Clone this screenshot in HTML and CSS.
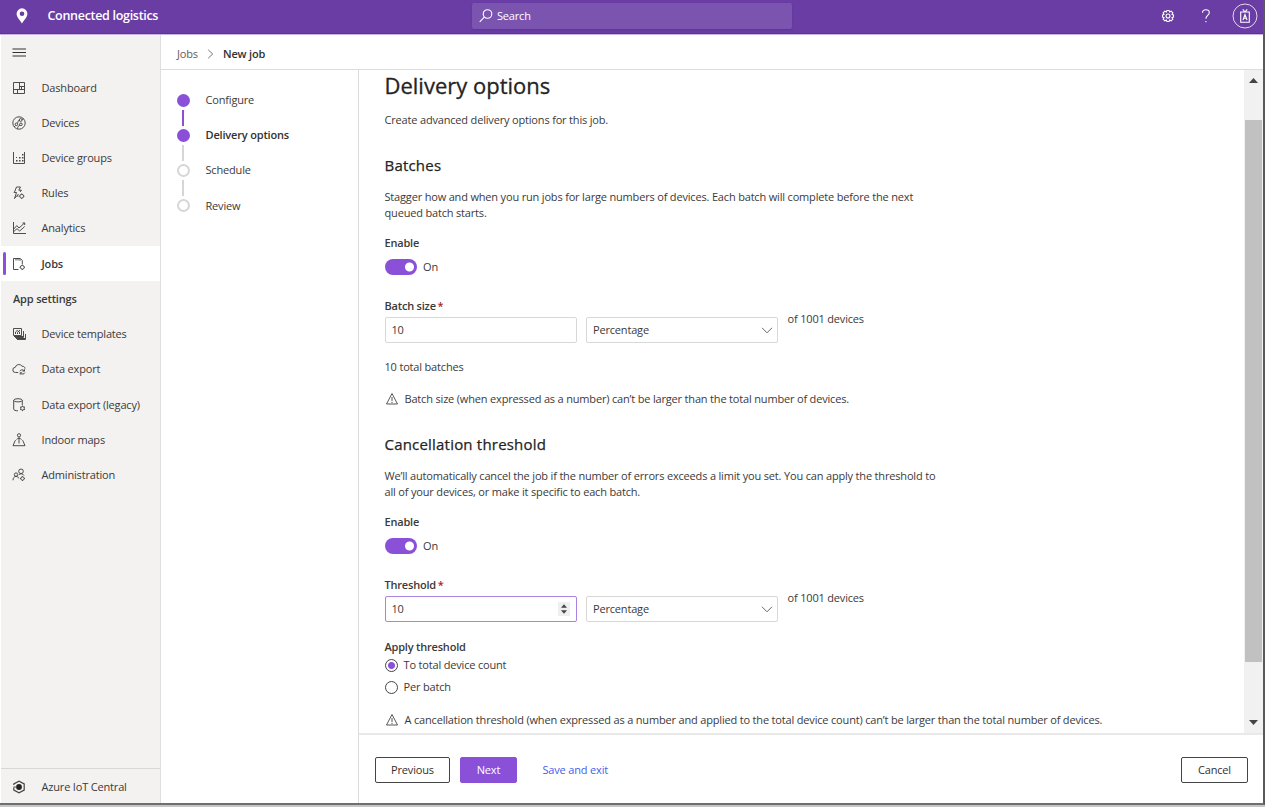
FILE: index.html
```html
<!DOCTYPE html>
<html lang="en">
<head>
<meta charset="utf-8">
<title>Connected logistics - New job</title>
<link rel="stylesheet" href="styles.css">
</head>
<body>
<div class="window">
  <header class="topbar">
    <svg class="pin" width="12" height="16" viewBox="0 0 12 16"><path fill="#fff" fill-rule="evenodd" d="M6 0.3a5.4 5.4 0 0 0-5.4 5.4C.6 9.2 4 12 6 15.6 8 12 11.4 9.2 11.4 5.7A5.4 5.4 0 0 0 6 .3zM6 3.4a2.3 2.3 0 1 1 0 4.6 2.3 2.3 0 0 1 0-4.6z"/></svg>
    <span class="brand">Connected logistics</span>
    <div class="search">
      <svg class="line-icon" width="14" height="14" viewBox="0 0 14 14"><circle cx="8.5" cy="5" r="4.3"/><path d="M5.3 8.2L.7 12.9"/></svg>
      <span>Search</span>
    </div>
    <div class="top-actions">
      <svg class="line-icon" width="14" height="14" viewBox="0 0 14 14"><circle cx="7" cy="7" r="2"/><path d="M5.900.700h2.200l.5 1.500 1.600-.8 1.600 1.600-.8 1.600 1.500.5v2.200l-1.500.5.8 1.600-1.600 1.600-1.600-.8-.5 1.500H5.900l-.5-1.500-1.600.8-1.600-1.600.8-1.600-1.500-.5V5.100l1.500-.5-.8-1.600 1.600-1.600 1.600.8z" transform="translate(0 .8)"/></svg>
      <svg class="line-icon" width="10" height="14" viewBox="0 0 10 14"><path d="M1.500 3.800C1.500 1.900 2.900.8 4.900.8s3.400 1.100 3.400 2.900c0 2.700-3.400 2.800-3.400 6"/><path d="M4.900 11.900v1.300"/></svg>
      <svg class="line-icon" width="26" height="26" viewBox="0 0 26 26"><circle cx="13" cy="13" r="12" stroke-width=".8"/><path d="M8.700 9h8.600v10.300H8.700zM10.800 6.300L13 9l2.200-2.700M11 17l2-5.500 2 5.500M11.700 15.200h2.600"/></svg>
    </div>
  </header>
  <div class="body">
    <nav class="sidebar">
      <div class="burger"><svg width="14" height="9" viewBox="0 0 14 9"><path stroke="#333" d="M.500 1h13.500M.500 4.500h13.500M.500 8h13.500"/></svg></div>
      <a class="item"><svg width="14" height="14" viewBox="0 0 14 14"><path d="M1.500 1.500h11v11h-11zM7.500 1.500v7M1.500 8.500h11M7.500 5.500h5M5.500 8.500v4M9.500 5.500v3"/></svg><span>Dashboard</span></a>
      <a class="item"><svg width="14" height="14" viewBox="0 0 14 14"><circle cx="7" cy="7" r="6.200"/><circle cx="8.700" cy="4" r="1.400"/><circle cx="4.400" cy="8.300" r="1.300"/><circle cx="8.900" cy="8.300" r="1.300"/><path d="M7.400 4.300C5 4.500 6.800 7 5.200 7.300M2 11l1.600-1.600M5.500 12.800c0-2 1.200-3.200 2.500-3.700M10 3.500l1.500-.8"/></svg><span>Devices</span></a>
      <a class="item"><svg width="14" height="14" viewBox="0 0 14 14"><path d="M1.500 1v11.500h11V1"/><path class="dots" d="M4 9h1.500v1.500H4zM7 9h1.500v1.500H7zM10 9h1.500v1.500H10zM7 6h1.500v1.500H7zM10 6h1.500v1.500H10zM10 3h1.500v1.500H10zM4 6h1v1H4z"/></svg><span>Device groups</span></a>
      <a class="item"><svg width="14" height="14" viewBox="0 0 14 14"><path d="M4.500 1h4L6.800 4.200h2.700L8 6M4.500 1L2.300 6.500h2.200L2.500 12.500l4-4.500M2.300 6.500H1.800M5 10h1.500"/><circle cx="9.700" cy="10.200" r="1.900"/><path d="M9.700 7.500v.8M9.700 12.100v.8M7 10.200h.8M11.600 10.200h.8"/></svg><span>Rules</span></a>
      <a class="item"><svg width="14" height="14" viewBox="0 0 14 14"><path d="M1.500 1v11.500H14M1.800 8l3-3.400L7 7l5.500-5M1.800 10.500L5 7.700 7.700 10l5-4.500M10.500 2h2.200v2"/></svg><span>Analytics</span></a>
      <a class="item current"><svg width="14" height="14" viewBox="0 0 14 14"><path d="M6.500 12.500h-5v-11h6.800l2 2V7M4 1.500v2M6 1.500v2M8 1.500v2.300"/><circle cx="10.300" cy="10.300" r="1.900"/><path d="M10.300 7.500v.9M10.300 12.200v.9M7.600 10.300h.8M12.200 10.300h.8"/></svg><span>Jobs</span></a>
      <div class="item group">App settings</div>
      <a class="item"><svg width="14" height="14" viewBox="0 0 14 14"><path d="M1.500 1.500h8v7h-8zM3 10.500h8.500V4M5 12.500h8.500V7"/><path d="M3.500 7V5l1.600-1.500L7.500 5v2M5.500 7V5.500M8 3L5.500 5.500"/><path d="M2 9.500h9M4 11.500h9" stroke-width="1.200"/></svg><span>Device templates</span></a>
      <a class="item"><svg width="14" height="14" viewBox="0 0 14 14"><path d="M6.200 10.500H3.500a2.600 2.600 0 0 1-.2-5.200A3.700 3.700 0 0 1 10 4.200c1.900-.1 3 1 3 2.500M7.800 9.300c.6-1.700 3.300-2.100 4.400-.4M12.500 7.300v1.800h-1.900M12.900 10.600c-.6 1.700-3.300 2.100-4.400.4M8.200 12.600v-1.800h1.900"/></svg><span>Data export</span></a>
      <a class="item"><svg width="14" height="14" viewBox="0 0 14 14"><ellipse cx="6" cy="2.300" rx="4.300" ry="1.600"/><path d="M1.700 2.300v8.900c0 .9 1.800 1.600 4.300 1.600M10.300 2.300V7"/><circle cx="10.500" cy="10.300" r="1.800"/><path d="M10.500 7.500v1M10.500 12.100v1M8 8.900l.9.500M12 11.200l1 .5M8 11.700l.9-.5M12 9.400l1-.5"/></svg><span>Data export (legacy)</span></a>
      <a class="item"><svg width="14" height="14" viewBox="0 0 14 14"><circle cx="7" cy="2.300" r="1.600"/><path d="M7 4v6.500M4.500 6.500C5 5.600 6 5.500 7 5.500s2 .1 2.500 1M3.700 7.500h-.5L1 12.700h12l-2.200-5.200h-.5"/></svg><span>Indoor maps</span></a>
      <a class="item"><svg width="14" height="14" viewBox="0 0 14 14"><circle cx="9" cy="3.300" r="2.300"/><circle cx="4" cy="6.600" r="1.700"/><path d="M1 12.300c0-2.300 1.200-3.900 3-3.900s2.500 1 2.700 2M6.700 6.800c1.300-1.400 4.300-1.400 5.300.7"/><circle cx="10.500" cy="10.500" r="1.700"/><path d="M10.500 8v.8M10.500 12.200v.8M8 10.500h.8M12.200 10.500h.8"/></svg><span>Administration</span></a>
      <a class="item central"><svg width="14" height="14" viewBox="0 0 14 14"><path d="M1.800 5V3.900L7 1.200l5.200 2.700v6.200L7 12.800l-5.200-2.700V7.500" stroke-width="1.200"/><circle cx="7" cy="7" r="2.900" fill="#222" stroke="none"/><path d="M1.500 7h3"/></svg><span>Azure IoT Central</span></a>
    </nav>
    <main class="main">
      <div class="crumbs"><span class="crumb">Jobs</span><svg width="7" height="10" viewBox="0 0 7 10"><path fill="none" stroke="#777" d="M1.200.8l4.500 4.200-4.500 4.200"/></svg><span class="here">New job</span></div>
      <div class="columns">
        <ol class="steps">
          <li class="done"><i></i><span>Configure</span></li>
          <li class="active"><i></i><span>Delivery options</span></li>
          <li><i></i><span>Schedule</span></li>
          <li><i></i><span>Review</span></li>
        </ol>
        <section class="pane">
          <div class="scroller">
            <div class="form">
              <h1>Delivery options</h1>
              <p class="intro">Create advanced delivery options for this job.</p>
              <h2>Batches</h2>
              <p class="about">Stagger how and when you run jobs for large numbers of devices. Each batch will complete before the next<br>queued batch starts.</p>
              <div class="label enable">Enable</div>
              <div class="switch"><span class="track"></span><span>On</span></div>
              <div class="label">Batch size <b>*</b></div>
              <div class="fields">
                <div class="box"><span>10</span></div>
                <div class="box select"><span>Percentage</span><svg width="12" height="7" viewBox="0 0 12 7"><path d="M1 .8l5 5 5-5"/></svg></div>
                <span class="of">of 1001 devices</span>
              </div>
              <p class="total">10 total batches</p>
              <p class="warn"><svg width="12" height="12" viewBox="0 0 12 12"><path d="M6 .5l5.500 10.500H.5zM6 4v4M6 8.800v1.200"/></svg><span>Batch size (when expressed as a number) can’t be larger than the total number of devices.</span></p>
              <h2>Cancellation threshold</h2>
              <p class="about">We’ll automatically cancel the job if the number of errors exceeds a limit you set. You can apply the threshold to<br>all of your devices, or make it specific to each batch.</p>
              <div class="label enable">Enable</div>
              <div class="switch"><span class="track"></span><span>On</span></div>
              <div class="label">Threshold <b>*</b></div>
              <div class="fields">
                <div class="box focus"><span>10</span><svg class="spin" width="12" height="14" viewBox="0 0 12 14"><path d="M6 2.300l3 3.500H3zM6 11.700l3-3.500H3z"/></svg></div>
                <div class="box select"><span>Percentage</span><svg width="12" height="7" viewBox="0 0 12 7"><path d="M1 .8l5 5 5-5"/></svg></div>
                <span class="of">of 1001 devices</span>
              </div>
              <div class="label apply">Apply threshold</div>
              <div class="radio on"><i></i><span>To total device count</span></div>
              <div class="radio"><i></i><span>Per batch</span></div>
              <p class="warn last"><svg width="12" height="12" viewBox="0 0 12 12"><path d="M6 .5l5.500 10.500H.5zM6 4v4M6 8.800v1.200"/></svg><span>A cancellation threshold (when expressed as a number and applied to the total device count) can’t be larger than the total number of devices.</span></p>
            </div>
            <div class="scrollbar">
              <svg width="9" height="5" viewBox="0 0 9 5"><path fill="#444" d="M0 5L4.500 0 9 5z"/></svg>
              <div class="thumb"></div>
              <svg width="9" height="5" viewBox="0 0 9 5"><path fill="#444" d="M0 0l4.500 5L9 0z"/></svg>
            </div>
          </div>
          <footer class="footer">
            <button class="btn prev">Previous</button>
            <button class="btn next">Next</button>
            <a class="save">Save and exit</a>
            <button class="btn cancel">Cancel</button>
          </footer>
        </section>
      </div>
    </main>
  </div>
</div>
</body>
</html>
```
FILE: styles.css
```css
* { box-sizing: border-box; }
body {
  margin: 0;
  height: 807px;
  overflow: hidden;
  background: #c6c6c6;
  font: 11px/16px "Open Sans", "Noto Sans", sans-serif;
  letter-spacing: -.175px;
  color: #3b3a39;
  white-space: nowrap;
}
h1, h2, p, ol { margin: 0; padding: 0; font-weight: 400; }
svg { display: block; flex: none; overflow: visible; }
.window {
  width: 1265px;
  height: 805px;
  display: flex;
  flex-direction: column;
  background: #fff;
  border-right: 2px solid #5a5a5c;
  border-bottom: 2px solid #6e6e6e;
}
.topbar {
  height: 35px;
  flex: none;
  display: flex;
  align-items: center;
  padding: 0 5px 3px 16px;
  background: #6a3da5;
  border-bottom: 1px solid #c9b3e4;
  box-shadow: inset 0 -1px #5f3299;
  color: #fff;
}
.brand { margin-left: 19.500px; width: 424.500px; font-size: 12.500px; font-weight: 600; letter-spacing: -.3px; }
.search {
  width: 320px;
  height: 26px;
  display: flex;
  align-items: center;
  gap: 4px;
  padding-left: 7px;
  background: #7a54af;
  border-radius: 2px;
  box-shadow: 0 1px 2px #5c3494;
}
.line-icon { fill: none; stroke: #fff; stroke-width: 1.100; }
.top-actions { margin-left: auto; display: flex; align-items: center; gap: 23px; }
.top-actions .line-icon:nth-child(2) { margin-left: 3px; margin-right: -2px; }
.body { flex: 1; display: flex; min-height: 0; }
.sidebar {
  width: 160px;
  flex: none;
  margin-left: 1px;
  display: flex;
  flex-direction: column;
  background: #f3f2f1;
  border-right: 1px solid #e1dfdd;
}
.burger { height: 35px; flex: none; padding: 13px 0 0 11px; }
.item { height: 35.230px; flex: none; display: flex; align-items: center; gap: 15.500px; padding-left: 11px; }
.item svg { fill: none; stroke: #444; stroke-width: .95; }
.item .dots { fill: #444; stroke: none; }
.current { background: #fff; font-weight: 600; position: relative; }
.current::before { content: ""; position: absolute; left: 2px; top: 6px; width: 3px; height: 23px; border-radius: 2px; background: #8a50d8; }
.group { font-weight: 600; padding-left: 12px; }
.central { margin-top: auto; border-top: 1px solid #d9d7d5; height: 35px; padding-top: 1px; }
.main { flex: 1; display: flex; flex-direction: column; min-width: 0; }
.crumbs { height: 35px; flex: none; display: flex; align-items: center; padding: 3px 0 0 16px; border-bottom: 1px solid #dcdcdc; }
.crumb { color: #605e5c; width: 30px; }
.here { margin-left: 9px; font-weight: 600; color: #323130; }
.columns { flex: 1; display: flex; min-height: 0; }
.steps { width: 198px; flex: none; list-style: none; padding: 22px 0 0 15.500px; border-right: 1px solid #dcdcdc; }
.steps li { height: 35.200px; display: flex; gap: 16px; position: relative; }
.steps i { width: 13px; height: 13px; margin-top: 1.500px; border-radius: 50%; border: 2px solid #d6d6d6; }
.steps li:not(:last-child)::after { content: ""; position: absolute; left: 5.500px; top: 17.500px; width: 2px; height: 16px; background: #d6d6d6; }
.steps .done i, .steps .active i { background: #8a50d8; border-color: #8a50d8; }
.steps .done::after { background: #8a50d8 !important; }
.steps .active span { font-weight: 600; color: #323130; }
.pane { flex: 1; display: flex; flex-direction: column; min-width: 0; }
.scroller { height: 665px; flex: none; display: flex; border-bottom: 2px solid #e9e9e9; }
.form { flex: 1; padding-left: 25.500px; }
.form h1 { height: 32px; line-height: 30px; font-size: 22px; letter-spacing: 0; color: #252423; -webkit-text-stroke: .3px; }
.intro { margin-top: 10px; }
.form h2 { height: 20px; line-height: 18px; margin-top: 28px; font-size: 15px; letter-spacing: .2px; color: #252423; -webkit-text-stroke: .25px; }
.about { margin-top: 13px; }
.label { margin-top: 23px; font-weight: 600; letter-spacing: -.2px; }
.label b { color: #a4262c; font-weight: 600; margin-left: -1px; }
.enable { margin-top: 14px; }
.switch { height: 16px; margin-top: 8px; display: flex; align-items: center; gap: 6.500px; }
.track { width: 32px; height: 16px; border-radius: 8px; background: radial-gradient(circle at 24.500px 8px, #fff 4px, #8a50d8 5px); }
.fields { margin-top: 3px; display: flex; gap: 9.500px; }
.box { width: 192px; height: 26px; display: flex; align-items: center; justify-content: space-between; padding: 0 6px; border: 1px solid #d8d8d8; border-radius: 2px; }
.box svg { fill: none; stroke: #666; }
.select { padding-right: 4px; }
.focus { border-color: #a982e2; }
.box .spin { background: #efefef; fill: #444; stroke: none; }
.of { margin-top: -6px; }
.total, .warn { margin-top: 16px; }
.warn { display: flex; align-items: center; gap: 7px; padding-left: 1px; }
.warn svg { fill: none; stroke: #444; stroke-width: .9; }
.apply { margin-top: 17px; }
.radio { height: 16px; margin-top: 6px; display: flex; align-items: center; gap: 6px; }
.apply + .radio { margin-top: 2px; }
.radio i { width: 13px; height: 13px; border: 1px solid #444; border-radius: 50%; }
.radio.on i { background: radial-gradient(circle, #8a50d8 3px, #fff 4px); }
.last { margin-top: 17px; }
.scrollbar { width: 19px; display: flex; flex-direction: column; align-items: center; background: #f1f1f1; padding: 8px 0; }
.thumb { width: 17px; height: 542px; margin: 37px 0 auto; background: #c1c1c1; }
.footer { flex: 1; display: flex; align-items: center; padding: 1px 15px 0 16px; }
.btn { height: 26px; padding: 0; font: inherit; letter-spacing: inherit; border: 1px solid #444; border-radius: 2px; background: #fff; color: #323130; }
.prev { width: 75px; }
.next { width: 57px; margin-left: 10px; background: #8a50d8; border-color: #8a50d8; color: #fff; }
.save { margin-left: 25.500px; color: #4361ee; }
.cancel { width: 67px; margin-left: auto; }
```
